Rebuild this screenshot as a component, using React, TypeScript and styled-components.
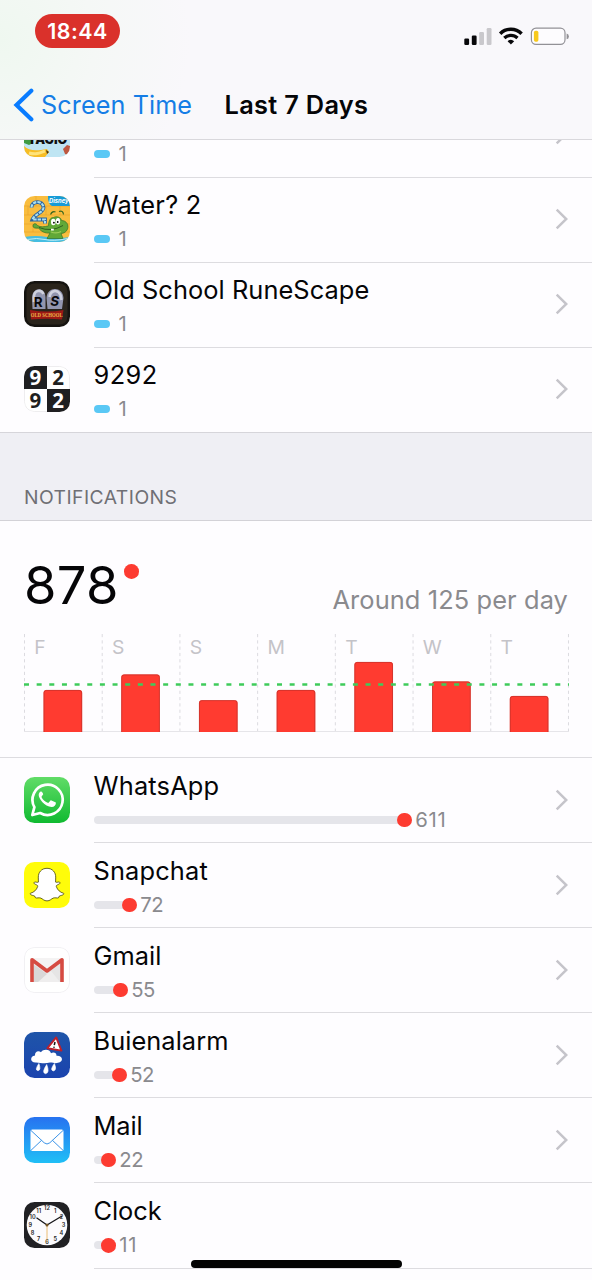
import React from 'react';
import styled, { createGlobalStyle } from 'styled-components';

const GlobalStyle = createGlobalStyle`
  * { box-sizing: border-box; }
  body { margin: 0; background: #fefdff; }
  svg { display: block; }
`;

const Screen = styled.main`
  width: 592px;
  height: 1280px;
  overflow: hidden;
  display: flex;
  flex-direction: column;
  position: relative;
  background: #fefdff;
  color: #050507;
  font-family: Inter, 'Liberation Sans', sans-serif;
`;

const Header = styled.header`
  flex: none;
  height: 140px;
  position: relative;
  z-index: 1;
  display: flex;
  flex-direction: column;
  border-bottom: 1.5px solid #d9d8dc;
  background: radial-gradient(ellipse 190px 190px at 0 40px, #eff8f0 0, #f5f8f6 50%, rgba(249, 248, 251, 0) 100%), #f9f8fb;
`;

const StatusBar = styled.div`
  height: 62px;
  padding: 14px 23px 0 35px;
  display: flex;
  justify-content: space-between;
  align-items: flex-start;
`;

const TimePill = styled.div`
  width: 85px;
  height: 33.5px;
  border-radius: 17px;
  background: #da312b;
  color: #fff;
  font-size: 21.4px;
  font-weight: 600;
  line-height: 34px;
  text-align: center;
  letter-spacing: 0.45px;
`;

const StatusIcons = styled.div`
  display: flex;
  margin-top: 13px;
`;

const NavBar = styled.nav`
  height: 76px;
  padding: 10px 0 0 13px;
  display: flex;
  align-items: center;
`;

const BackLink = styled.span`
  display: flex;
  align-items: center;
  gap: 7px;
  width: 211.5px;
  color: #147de6;
  font-size: 25.2px;
  line-height: 32px;
  white-space: nowrap;
  letter-spacing: 0.1px;
`;

const PageTitle = styled.h1`
  margin: 0;
  font-size: 25.3px;
  line-height: 32px;
  font-weight: 600;
  white-space: nowrap;
  letter-spacing: 0.33px;
`;

const PickupList = styled.section`
  flex: none;
  margin-top: -47px;
`;

const NotificationList = styled.section`
  flex: none;
  border-top: 1px solid #dddce0;
`;

const Row = styled.article<{ $offset?: number; $full?: boolean }>`
  height: ${p => (p.$offset ? 85.1 : 85)}px;
  padding-left: 24px;
  display: flex;
  gap: 23.5px;
  ${p => p.$full && 'border-bottom: 1px solid #d6d5da;'}
  & > svg { margin-top: ${p => 18 + (p.$offset ?? 0)}px; }
`;

const AppIcon = styled.svg`
  width: 46px;
  height: 46px;
  flex: none;
  border-radius: 10.5px;
`;

const RowBody = styled.div<{ $offset?: number; $full?: boolean }>`
  flex: 1;
  padding: ${p => 10.5 + (p.$offset ?? 0)}px 24px 0 0;
  display: flex;
  justify-content: space-between;
  border-bottom: ${p => (p.$full ? '0' : '1px solid #dddce0')};
`;

const RowText = styled.div`
  display: flex;
  flex-direction: column;
  gap: 6px;
`;

const AppName = styled.h2<{ $track: number }>`
  margin: 0;
  font-size: 25.4px;
  line-height: 32px;
  font-weight: 400;
  white-space: nowrap;
  letter-spacing: ${p => p.$track}px;
`;

const Meter = styled.div`
  height: 24px;
  display: flex;
  align-items: center;
  color: #8a8a8e;
  font-size: 20.3px;
  line-height: 24px;
`;

const Pill = styled.i`
  width: 16px;
  height: 8px;
  border-radius: 4px;
  background: #5ac8f5;
  margin-right: 9px;
`;

const Track = styled.i`
  height: 8px;
  border-radius: 4px 0 0 4px;
  background: #e5e5ea;
`;

const Dot = styled.i`
  flex: none;
  width: 14.6px;
  height: 14.6px;
  border-radius: 50%;
  background: #fd3b31;
  margin: 0 3.6px 0 -7px;
`;

const Count = styled.span<{ $track?: number }>`
  letter-spacing: ${p => p.$track ?? -0.4}px;
`;

const Chevron = styled.svg`
  margin-top: 19px;
  width: 13px;
  height: 22px;
`;

const SectionHeader = styled.div`
  flex: none;
  height: 88px;
  padding: 52px 24px 0;
  background: #efeff4;
  border-bottom: 1px solid #d3d2d7;
  color: #6f6f74;
  font-size: 19.3px;
  line-height: 24px;
  letter-spacing: 0.45px;
`;

const Summary = styled.section`
  flex: none;
  height: 236px;
  padding: 34px 24px 0 24px;
`;

const Totals = styled.div`
  height: 79px;
  display: flex;
  justify-content: space-between;
`;

const Total = styled.div`
  display: flex;
  font-size: 52.5px;
  line-height: 60px;
  letter-spacing: 0.3px;
`;

const TotalDot = styled(Dot)`
  margin: 9px 0 0 5.5px;
`;

const Average = styled.div`
  padding-top: 28.5px;
  font-size: 25.4px;
  line-height: 32px;
  letter-spacing: 0.1px;
  color: #8a8a8e;
  white-space: nowrap;
`;

const iconText = { fontFamily: 'Inter, sans-serif', textAnchor: 'middle' as const };

const FruitIcon = () => (
  <AppIcon viewBox="0 0 46 46">
    <rect width="46" height="46" fill="#bfe5f3" />
    <path d="M0 24h9v8l-4 2-5-2z" fill="#3f9b43" />
    <text x="23.5" y="33" fontSize="12.5" fontWeight="900" fill="#111" {...iconText}>TAGIO</text>
    <path d="M0 35c5 5 12 5 23 3l2 3-4 5H0z" fill="#f7bd25" />
    <path d="M5 42c7 2 11 0 16-2" stroke="#ffe37a" strokeWidth="3" fill="none" />
    <path d="M22 39l3 2-2 2z" fill="#453417" />
    <path d="M39 38l4-4 3 1v10l-5-2z" fill="#bf5840" />
  </AppIcon>
);

const WaterIcon = () => (
  <AppIcon viewBox="0 0 46 46">
    <rect width="46" height="46" fill="#f9bd3f" />
    <path d="M0 10h46M0 19h46M0 28h46M0 36h46M12 0v10M22 10v9M36 10v9M9 28v8M4 10v9" stroke="#e9a52c" strokeWidth=".7" />
    <path d="M24 0h22v10H28q-4-2-4-10z" fill="#169bd7" />
    <text x="34.800" y="7.200" fontSize="5.800" fontWeight="700" fontStyle="italic" fill="#fff" {...iconText}>Disney</text>
    <path d="M7.500 11.500c0-7 11.500-7.500 12 0 0 5-9 6.500-11 12h12.500v4" stroke="#2c64a0" strokeWidth="3.800" fill="none" />
    <path d="M7.500 11.500c0-7 11.500-7.500 12 0 0 5-9 6.500-11 12h12.500v4" stroke="#a9dff0" strokeWidth="2.100" strokeDasharray="3.400 1" fill="none" />
    <path d="M0 41q12-2 23 0t23 0v5H0z" fill="#45bde2" />
    <path d="M9 30c0-3 3-3 4.500-.5 3 1.800 7 1.500 11 .3 0-5 2-8.500 5-8.300 3-1.700 7.500-.5 8 3 5 0 7.500 4.500 6 8.500-1 3-4 4.500-6.500 4.500l2 5H23l3-5.500c-5 .5-9-1.500-11.500-5-3 .5-5.500 0-5.500-2z" fill="#61a838" stroke="#357327" strokeWidth=".7" />
    <path d="M15 31.500q12 5 24-2" stroke="#2d621f" strokeWidth="1" fill="none" />
    <path d="M27 36q6 2 10-.5" stroke="#9acb57" strokeWidth="1.200" fill="none" />
    <path d="M26.500 18.500q2-4 5-2.500M35 15.500q4-1.500 4.500 3" stroke="#38671f" strokeWidth="1.200" fill="none" />
    <ellipse cx="29.300" cy="26" rx="2.300" ry="3.200" fill="#fff" />
    <ellipse cx="34" cy="25.300" rx="2.100" ry="3.200" fill="#fff" />
    <circle cx="29.900" cy="26.700" r=".9" />
    <circle cx="33.700" cy="26" r=".9" />
    <path d="M27 32.800h2.800v1.800H27z" fill="#fff" />
    <path d="M3 43.500q10-2 18 0t23-1" stroke="#c3edf4" strokeWidth="1" fill="none" />
  </AppIcon>
);

const RuneIcon = () => (
  <AppIcon viewBox="0 0 46 46">
    <rect width="46" height="46" fill="#151310" />
    <rect x="2.500" y="2.500" width="41" height="41" rx="8" fill="#2a241c" />
    <path d="M8.500 28L8 17C8 6 21 5 21.500 16v12zM23.500 28L22.500 17C23 5 39 5 39.500 17L38 28z" fill="#9295ae" />
    <path d="M10 21v-5c0-7 7-8 9.500-3M25.500 16c1-7 8-8 11-2l1 5" stroke="#cfd1de" strokeWidth="2.600" fill="none" />
    <text x="14.200" y="25.500" fontSize="13.500" fontWeight="700" fill="#08080b" {...iconText}>R</text>
    <text x="30.600" y="25.200" fontSize="13.500" fontWeight="700" fill="#08080b" fontStyle="italic" {...iconText}>S</text>
    <path d="M6 29q17 3 33.500 0l-1.500 9.500q-15-1.500-31 0z" fill="#9c1815" />
    <text x="22.700" y="35.800" fontSize="6" fontWeight="700" fill="#e9b94c" textAnchor="middle" fontFamily="Liberation Serif, serif" textLength="32" lengthAdjust="spacingAndGlyphs">OLD SCHOOL</text>
  </AppIcon>
);

const NineIcon = () => (
  <AppIcon viewBox="0 0 46 46">
    <rect width="46" height="46" fill="#fff" />
    <rect x=".4" y=".4" width="45.200" height="45.200" rx="10" fill="none" stroke="#e7e6e9" strokeWidth=".8" />
    <path d="M0 0h23v23H0zM23 23h23v23H23z" fill="#1f1f21" />
    <g fontFamily="Open Sans, sans-serif" fontSize="20.500" fontWeight="700" textAnchor="middle">
      <text x="11.400" y="18.600" fill="#fff">9</text>
      <text x="34" y="18.600" fill="#1f1f21">2</text>
      <text x="11.400" y="41.600" fill="#1f1f21">9</text>
      <text x="34" y="41.600" fill="#fff">2</text>
    </g>
  </AppIcon>
);

const WhatsAppIcon = () => (
  <AppIcon viewBox="0 0 46 46">
    <defs>
      <linearGradient id="wa" x2="0" y2="1"><stop stopColor="#61dc67" /><stop offset="1" stopColor="#10ba31" /></linearGradient>
    </defs>
    <rect width="46" height="46" fill="url(#wa)" />
    <path d="M8.300 38l2.100-7.800A15.100 15.100 0 1 1 16.200 36z" fill="none" stroke="#fff" strokeWidth="2.700" strokeLinejoin="round" />
    <path d="M18.200 15.300c-.4-.8-.8-.8-1.500-.7-1 .3-2 1.600-2 3.500 0 3.400 5.800 11.600 13 12 2.500 0 4.200-1.800 4.200-4 0-.5-.1-.6-.5-.8l-4-1.900c-.5-.2-.8-.1-1.100.3l-1.500 1.900c-.4.4-.7.4-1.200.2-2.500-1-5-3.300-6-5.600-.2-.4 0-.7.2-1l1.100-1.400c.3-.4.3-.7.2-1z" fill="#fff" />
  </AppIcon>
);

const SnapchatIcon = () => (
  <AppIcon viewBox="0 0 46 46">
    <rect width="46" height="46" fill="#fffc0a" />
    <path d="M23 6.300c5.600 0 8.700 4.200 8.700 8.800l-.1 5c1 .5 2.100 0 3.100-.1 1.400-.1 1.800 1.200.7 1.900-1.600 1-3.500 1.200-3.100 2.600 1.200 3.600 4 5.900 6.900 6.600.7.2.8.9.2 1.400-1.200 1-3.100 1-4 1.500-.7.6-.3 1.600-1.100 1.900-1.200.4-3.100-.5-5.100.2-2 .8-3.200 2.800-6.200 2.800s-4.200-2-6.200-2.800c-2-.7-3.900.2-5.100-.2-.8-.3-.4-1.300-1.100-1.900-.9-.5-2.800-.5-4-1.500-.6-.5-.5-1.200.2-1.400 2.900-.7 5.700-3 6.900-6.600.4-1.400-1.500-1.600-3.100-2.600-1.100-.7-.7-2 .7-1.900 1 .1 2.100.6 3.100.1l-.1-5c0-4.600 3.100-8.800 8.700-8.800z" fill="#fff" stroke="#44420c" strokeWidth=".8" strokeLinejoin="round" />
  </AppIcon>
);

const GmailIcon = () => (
  <AppIcon viewBox="0 0 46 46">
    <rect x=".4" y=".4" width="45.200" height="45.200" rx="10.200" fill="#fff" stroke="#ebeaee" strokeWidth=".8" />
    <path d="M8 11.500h30V35H8z" fill="#e6e5e5" />
    <path d="M8 11h30L23 23z" fill="#f4f3f3" />
    <path d="M10 35l9-11 4 3 4-3 9 11z" fill="#efeeee" />
    <path d="M10 18l13 9-9 8h-4z" fill="#d9d8d8" />
    <path d="M8 35V12.800L23 24l15-11.200V35" fill="none" stroke="#d64b42" strokeWidth="3.600" strokeLinejoin="round" />
  </AppIcon>
);

const RainIcon = () => (
  <AppIcon viewBox="0 0 46 46">
    <defs>
      <linearGradient id="rain" x2="0" y2="1"><stop stopColor="#1f55a9" /><stop offset="1" stopColor="#1b43ae" /></linearGradient>
    </defs>
    <rect width="46" height="46" fill="url(#rain)" />
    <path d="M12 30.500C6 31 5.500 24 11 23.500c-.5-4 3.500-5.500 6-3.300 2.500-3.500 9-3 10 1 3-1.500 5.500 0 5.500 2.500 6.500-.5 7.500 6 1.500 7-3 1.300-5.500-.5-8-.2-5 1.500-9 .5-14 0z" fill="#fff" />
    <path d="M14.900 31.500q2.500 6.800-1 7.200-3.500-.6 1-7.200zM22.700 32.500q3.400 8.500-1.200 9.200-4.300-.8 1.200-9.200zM30.400 31.500q2.800 6.800-1.100 7.400-3.800-.8 1.100-7.400z" fill="#fff" stroke="#fff" strokeWidth=".6" />
    <path d="M32.200 5.400L37.400 18.600 23.400 16.200z" fill="#fff" stroke="#bc202b" strokeWidth="1.900" strokeLinejoin="round" />
    <path d="M31 10l-.7 3.200" stroke="#111" strokeWidth="1.500" />
    <circle cx="30" cy="15.200" r=".8" fill="#111" />
  </AppIcon>
);

const MailIcon = () => (
  <AppIcon viewBox="0 0 46 46">
    <defs>
      <linearGradient id="mail" x2="0" y2="1"><stop stopColor="#2772f0" /><stop offset="1" stopColor="#20bff6" /></linearGradient>
    </defs>
    <rect width="46" height="46" fill="url(#mail)" />
    <rect x="6.500" y="12.600" width="33" height="21.400" rx="1.800" fill="#fff" />
    <path d="M7 13.500l13.200 12.300q2.800 2.400 5.600 0L39 13.500M7 33.300l10.600-10M39 33.300l-10.600-10" fill="none" stroke="#3b94e8" strokeWidth="1" />
  </AppIcon>
);

const ClockIcon = () => (
  <AppIcon viewBox="0 0 46 46">
    <rect width="46" height="46" fill="#212124" />
    <circle cx="23" cy="23" r="20.300" fill="#fcfbfd" />
    {Array.from({ length: 12 }, (_, i) => {
      const angle = ((i + 1) * Math.PI) / 6;
      return (
        <text key={i} x={23 + Math.sin(angle) * 16.6} y={24.9 - Math.cos(angle) * 16.6} fontSize="5.600" fontWeight="600" fill="#222" {...iconText}>
          {i + 1}
        </text>
      );
    })}
    <path d="M23 23v17" stroke="#eab765" strokeWidth=".9" />
    <path d="M12.500 15.800L23 23l15-9" fill="none" stroke="#17171a" strokeWidth="1.300" />
    <circle cx="23" cy="23" r="1.500" fill="#755624" />
  </AppIcon>
);

const Disclosure = () => (
  <Chevron viewBox="0 0 13 22">
    <path d="M1.700 1.700L11.300 11l-9.600 9.300" fill="none" stroke="#c5c4ca" strokeWidth="2.500" />
  </Chevron>
);

const pickups = [
  { name: 'Puzzle', icon: <FruitIcon />, track: 0 },
  { name: 'Water? 2', icon: <WaterIcon />, track: 0.25 },
  { name: 'Old School RuneScape', icon: <RuneIcon />, track: 0.06 },
  { name: '9292', icon: <NineIcon />, track: 0.4 },
];

const alerts = [
  { name: 'WhatsApp', icon: <WhatsAppIcon />, count: 611, length: 310.5, track: 0.18, countTrack: 0.8 },
  { name: 'Snapchat', icon: <SnapchatIcon />, count: 72, length: 35.5, track: 0.15 },
  { name: 'Gmail', icon: <GmailIcon />, count: 55, length: 26.5, track: 0.05 },
  { name: 'Buienalarm', icon: <RainIcon />, count: 52, length: 25.5, track: 0.05 },
  { name: 'Mail', icon: <MailIcon />, count: 22, length: 14.5, track: -0.1 },
  { name: 'Clock', icon: <ClockIcon />, count: 11, length: 14.5, track: -0.05, countTrack: 0.8, last: true },
];

const days = [
  { label: 'F', height: 42 },
  { label: 'S', height: 57.5 },
  { label: 'S', height: 31.8 },
  { label: 'M', height: 42 },
  { label: 'T', height: 70 },
  { label: 'W', height: 50.5 },
  { label: 'T', height: 36 },
];

const DAY_WIDTH = 77.71;

const WeekChart = () => (
  <svg width="545" height="100" viewBox="0 0 545 100">
    {Array.from({ length: 8 }, (_, i) => (
      <path key={i} d={`M${0.5 + i * DAY_WIDTH} 0v98`} stroke="#dcdbe0" strokeDasharray="3.200 3.100" />
    ))}
    <path d="M0 97.500h545" stroke="#e6e5e9" />
    {days.map((day, i) => (
      <g key={i}>
        <text x={10.3 + i * DAY_WIDTH} y="19.800" fontSize="19.300" fill="#c4c3c8" fontFamily="Inter, sans-serif">{day.label}</text>
        <path
          d={`M${19.6 + i * DAY_WIDTH} 98v${2.5 - day.height}q0-2.500 2.500-2.500h33.500q2.500 0 2.500 2.500v${day.height - 2.5}z`}
          fill="#ff3b30"
        />
        <path
          d={`M${20 + i * DAY_WIDTH} 98v${2.9 - day.height}q0-2.500 2.500-2.500h32.700q2.500 0 2.500 2.500v${day.height - 2.9}`}
          fill="none"
          stroke="#c9322b"
          strokeWidth=".8"
        />
      </g>
    ))}
    <path d="M0 50.500h545" stroke="#3fcb5b" strokeWidth="2.600" strokeDasharray="5 7.650" />
  </svg>
);

const Signal = () => (
  <svg width="105" height="20" viewBox="0 0 105 20">
    <rect x=".3" y="11.500" width="4.800" height="6.500" rx="1.200" fill="#08080a" />
    <rect x="7.800" y="8.500" width="4.800" height="9.500" rx="1.200" fill="#08080a" />
    <rect x="15.200" y="5" width="4.800" height="13" rx="1.200" fill="#c9c8cc" />
    <rect x="22.700" y="1" width="4.800" height="17" rx="1.200" fill="#c9c8cc" />
    <g fill="none" stroke="#08080a">
      <path d="M36.200 6.700a15.200 15.200 0 0 1 21.400 0" strokeWidth="3.500" />
      <path d="M40.300 11a9.400 9.400 0 0 1 13.200 0" strokeWidth="3.200" />
    </g>
    <path d="M46.900 17.600l-3.300-3.400a4.800 4.800 0 0 1 6.600 0z" fill="#08080a" />
    <rect x="67.400" y="1.200" width="33.600" height="16.200" rx="4.600" fill="#fdfcfe" stroke="#929196" strokeWidth="1.200" />
    <rect x="69.900" y="3.800" width="4.500" height="11" rx="1.700" fill="#f8c91c" />
    <path d="M102.600 6.500q2.300.6 2.300 2.900t-2.300 2.900z" fill="#929196" />
  </svg>
);

const HomeIndicator = styled.div`
  position: absolute;
  left: 191px;
  top: 1260px;
  width: 211px;
  height: 7.5px;
  border-radius: 4px;
  background: #030303;
`;

export default function App() {
  return (
    <Screen>
      <GlobalStyle />
      <Header>
        <StatusBar>
          <TimePill>18:44</TimePill>
          <StatusIcons><Signal /></StatusIcons>
        </StatusBar>
        <NavBar>
          <BackLink>
            <svg width="21" height="34" viewBox="0 0 21 34">
              <path d="M18.300 2.700L3.500 17l14.800 14.300" fill="none" stroke="#087cff" strokeWidth="4.200" strokeLinecap="round" />
            </svg>
            Screen Time
          </BackLink>
          <PageTitle>Last 7 Days</PageTitle>
        </NavBar>
      </Header>
      <PickupList>
        {pickups.map((app, i) => (
          <Row key={app.name} $full={i === 3}>
            {app.icon}
            <RowBody $full={i === 3}>
              <RowText>
                <AppName $track={app.track}>{app.name}</AppName>
                <Meter><Pill /><Count>1</Count></Meter>
              </RowText>
              <Disclosure />
            </RowBody>
          </Row>
        ))}
      </PickupList>
      <SectionHeader>NOTIFICATIONS</SectionHeader>
      <Summary>
        <Totals>
          <Total>878<TotalDot /></Total>
          <Average>Around 125 per day</Average>
        </Totals>
        <WeekChart />
      </Summary>
      <NotificationList>
        {alerts.map(app => (
          <Row key={app.name} $offset={0.7}>
            {app.icon}
            <RowBody $offset={1.3}>
              <RowText>
                <AppName $track={app.track}>{app.name}</AppName>
                <Meter><Track style={{ width: app.length }} /><Dot /><Count $track={app.countTrack}>{app.count}</Count></Meter>
              </RowText>
              {!app.last && <Disclosure />}
            </RowBody>
          </Row>
        ))}
      </NotificationList>
      <HomeIndicator />
    </Screen>
  );
}
